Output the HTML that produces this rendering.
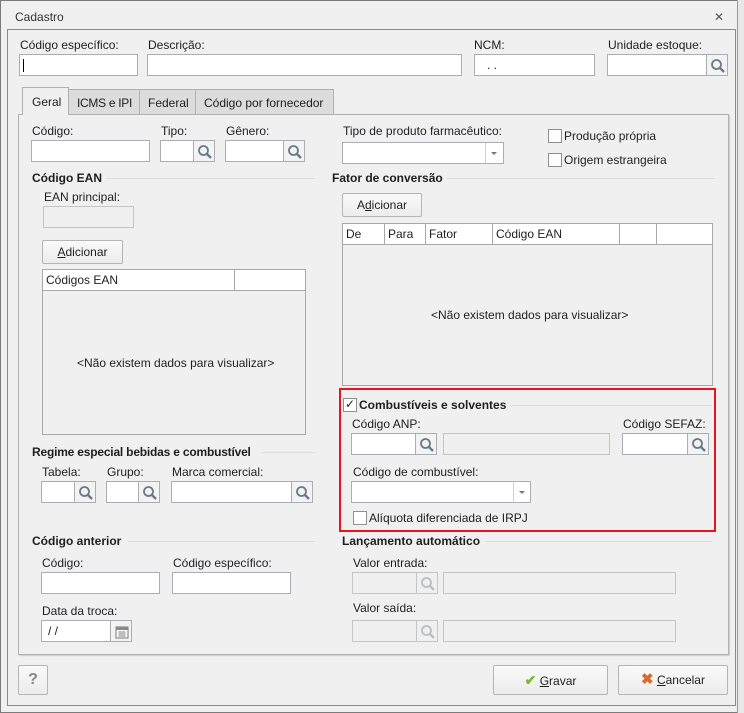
<!DOCTYPE html>
<html><head><meta charset="utf-8"><style>
*{box-sizing:border-box;margin:0;padding:0}
body{width:744px;height:713px;background:#f0f0f0;font-family:"Liberation Sans",sans-serif;font-size:12px;color:#1e1e1e;position:relative;overflow:hidden}
.a{position:absolute}
.l{position:absolute;white-space:nowrap;line-height:14px}
.i{position:absolute;background:#fff;border:1px solid #abadb3;height:22px}
.d{position:absolute;background:#f0f0f0;border:1px solid #c4c4c4;height:22px}
.sb{position:absolute;background:#f3f3f3;border:1px solid #abadb3;height:22px;width:22px}
.sb svg{position:absolute;left:3px;top:3px}
.b{font-weight:bold}
.hl{position:absolute;height:1px;background:#dcdcdc}
.btn{position:absolute;border:1px solid #b5b5b5;border-radius:2px;background:linear-gradient(#fafafa,#ececec);text-align:center}
.cb{position:absolute;width:14px;height:14px;border:1px solid #8f8f8f;background:#fff}
.grid{position:absolute;background:#f0f0f0;border:1px solid #a8a8a8}
.gh{position:absolute;left:0;right:0;top:0;height:21px;background:#fff;border-bottom:1px solid #a8a8a8}
.gc{position:absolute;top:0;height:20px;border-right:1px solid #a8a8a8;padding:3px 3px;line-height:14px}
</style></head><body>
<div class="a" style="left:0;top:0;width:744px;height:713px;border:1px solid #7a7a7a;background:#f0f0f0"></div>
<div class="a" style="left:737px;top:0;width:7px;height:713px;background:#e8e8e8;border-left:1px solid #9a9a9a"></div>
<div class="l" style="left:15px;top:10px;color:#333">Cadastro</div>
<div class="l" style="left:714px;top:10px;font-size:12px;color:#555">✕</div>
<div class="a" style="left:7px;top:29px;width:729px;height:677px;border:1px solid #8a8a8a;background:#f0f0f0"></div>

<div class="l" style="left:20px;top:38px">Código específico:</div>
<div class="l" style="left:148px;top:38px">Descrição:</div>
<div class="l" style="left:474px;top:38px">NCM:</div>
<div class="l" style="left:608px;top:38px">Unidade estoque:</div>
<div class="i" style="left:19px;top:54px;width:119px"><div class="a" style="left:3px;top:4px;width:1px;height:13px;background:#000"></div></div>
<div class="i" style="left:147px;top:54px;width:315px"></div>
<div class="i" style="left:474px;top:54px;width:121px"><span class="l" style="left:12px;top:3px">. .</span></div>
<div class="i" style="left:607px;top:54px;width:100px"></div>
<div class="sb" style="left:706px;top:54px"><svg width="16" height="16"><circle cx="6.5" cy="6.5" r="4.5" fill="none" stroke="#6a7a8a" stroke-width="1.8"/><path d="M10 10l4 4" stroke="#6a7a8a" stroke-width="2.4"/></svg></div>

<!-- tabs -->
<div class="a" style="left:18px;top:114px;width:711px;height:541px;border:1px solid #b0b0b0;background:#f0f0f0;box-shadow:1px 1px 1px #ccc"></div>
<div class="a" style="left:68px;top:89px;width:72px;height:26px;background:#dcdcdc;border:1px solid #b0b0b0"></div>
<div class="a" style="left:139px;top:89px;width:57px;height:26px;background:#dcdcdc;border:1px solid #b0b0b0"></div>
<div class="a" style="left:195px;top:89px;width:139px;height:26px;background:#dcdcdc;border:1px solid #b0b0b0"></div>
<div class="a" style="left:22px;top:87px;width:47px;height:28px;background:#f0f0f0;border:1px solid #b0b0b0;border-bottom:none"></div>
<div class="l" style="left:32px;top:95px">Geral</div>
<div class="l" style="left:77px;top:96px;letter-spacing:-0.3px">ICMS e IPI</div>
<div class="l" style="left:148px;top:96px">Federal</div>
<div class="l" style="left:204px;top:96px">Código por fornecedor</div>

<div class="l" style="left:32px;top:124px">Código:</div>
<div class="l" style="left:161px;top:124px">Tipo:</div>
<div class="l" style="left:226px;top:124px">Gênero:</div>
<div class="l" style="left:343px;top:124px">Tipo de produto farmacêutico:</div>
<div class="i" style="left:31px;top:140px;width:119px"></div>
<div class="i" style="left:160px;top:140px;width:34px"></div>
<div class="sb" style="left:193px;top:140px"><svg width="16" height="16"><circle cx="6.5" cy="6.5" r="4.5" fill="none" stroke="#6a7a8a" stroke-width="1.8"/><path d="M10 10l4 4" stroke="#6a7a8a" stroke-width="2.4"/></svg></div>
<div class="i" style="left:225px;top:140px;width:59px"></div>
<div class="sb" style="left:283px;top:140px"><svg width="16" height="16"><circle cx="6.5" cy="6.5" r="4.5" fill="none" stroke="#6a7a8a" stroke-width="1.8"/><path d="M10 10l4 4" stroke="#6a7a8a" stroke-width="2.4"/></svg></div>
<div class="i" style="left:342px;top:142px;width:162px"><div class="a" style="left:142px;top:0;width:1px;height:20px;background:#d0d0d0"></div><div class="a" style="left:148px;top:9px;border:3px solid transparent;border-top:3px solid #777"></div></div>
<div class="cb" style="left:548px;top:129px"></div><div class="l" style="left:564px;top:129px">Produção própria</div>
<div class="cb" style="left:548px;top:153px"></div><div class="l" style="left:564px;top:153px">Origem estrangeira</div>

<div class="l b" style="left:32px;top:171px">Código EAN</div><div class="hl" style="left:106px;top:178px;width:209px"></div>
<div class="l b" style="left:332px;top:171px">Fator de conversão</div><div class="hl" style="left:447px;top:178px;width:268px"></div>
<div class="l" style="left:44px;top:190px">EAN principal:</div>
<div class="d" style="left:43px;top:206px;width:91px"></div>
<div class="btn" style="left:42px;top:240px;width:81px;height:24px;line-height:22px"><u>A</u>dicionar</div>
<div class="btn" style="left:342px;top:193px;width:80px;height:24px;line-height:22px">A<u>d</u>icionar</div>
<div class="grid" style="left:42px;top:269px;width:264px;height:166px"><div class="gh"><div class="gc" style="left:0;width:192px">Códigos EAN</div></div>
<div class="l" style="left:34px;top:86px">&lt;Não existem dados para visualizar&gt;</div></div>
<div class="grid" style="left:342px;top:223px;width:371px;height:163px"><div class="gh"><div class="gc" style="left:0;width:42px">De</div><div class="gc" style="left:42px;width:41px">Para</div><div class="gc" style="left:83px;width:67px">Fator</div><div class="gc" style="left:150px;width:127px">Código EAN</div><div class="gc" style="left:277px;width:37px"></div></div>
<div class="l" style="left:88px;top:84px">&lt;Não existem dados para visualizar&gt;</div></div>

<!-- red box -->
<div class="a" style="left:339px;top:388px;width:377px;height:144px;border:2px solid #e8141c"></div>
<div class="cb" style="left:343px;top:398px"></div><div class="l" style="left:345px;top:397px;font-size:12px">✓</div>
<div class="l b" style="left:359px;top:398px">Combustíveis e solventes</div><div class="hl" style="left:510px;top:405px;width:202px"></div>
<div class="l" style="left:352px;top:417px">Código ANP:</div>
<div class="l" style="left:623px;top:417px">Código SEFAZ:</div>
<div class="i" style="left:351px;top:433px;width:65px"></div>
<div class="sb" style="left:415px;top:433px"><svg width="16" height="16"><circle cx="6.5" cy="6.5" r="4.5" fill="none" stroke="#6a7a8a" stroke-width="1.8"/><path d="M10 10l4 4" stroke="#6a7a8a" stroke-width="2.4"/></svg></div>
<div class="d" style="left:443px;top:433px;width:167px"></div>
<div class="i" style="left:622px;top:433px;width:66px"></div>
<div class="sb" style="left:687px;top:433px"><svg width="16" height="16"><circle cx="6.5" cy="6.5" r="4.5" fill="none" stroke="#6a7a8a" stroke-width="1.8"/><path d="M10 10l4 4" stroke="#6a7a8a" stroke-width="2.4"/></svg></div>
<div class="l" style="left:353px;top:465px">Código de combustível:</div>
<div class="i" style="left:351px;top:481px;width:180px"><div class="a" style="left:161px;top:0;width:1px;height:20px;background:#d0d0d0"></div><div class="a" style="left:167px;top:9px;border:3px solid transparent;border-top:3px solid #777"></div></div>
<div class="cb" style="left:353px;top:511px"></div><div class="l" style="left:369px;top:511px">Alíquota diferenciada de IRPJ</div>

<div class="l b" style="left:32px;top:445px;letter-spacing:-0.2px">Regime especial bebidas e combustível</div><div class="hl" style="left:262px;top:452px;width:53px"></div>
<div class="l" style="left:42px;top:465px">Tabela:</div>
<div class="l" style="left:107px;top:465px">Grupo:</div>
<div class="l" style="left:172px;top:465px">Marca comercial:</div>
<div class="i" style="left:41px;top:481px;width:34px"></div>
<div class="sb" style="left:74px;top:481px"><svg width="16" height="16"><circle cx="6.5" cy="6.5" r="4.5" fill="none" stroke="#6a7a8a" stroke-width="1.8"/><path d="M10 10l4 4" stroke="#6a7a8a" stroke-width="2.4"/></svg></div>
<div class="i" style="left:106px;top:481px;width:33px"></div>
<div class="sb" style="left:138px;top:481px"><svg width="16" height="16"><circle cx="6.5" cy="6.5" r="4.5" fill="none" stroke="#6a7a8a" stroke-width="1.8"/><path d="M10 10l4 4" stroke="#6a7a8a" stroke-width="2.4"/></svg></div>
<div class="i" style="left:171px;top:481px;width:121px"></div>
<div class="sb" style="left:291px;top:481px"><svg width="16" height="16"><circle cx="6.5" cy="6.5" r="4.5" fill="none" stroke="#6a7a8a" stroke-width="1.8"/><path d="M10 10l4 4" stroke="#6a7a8a" stroke-width="2.4"/></svg></div>

<div class="l b" style="left:32px;top:534px">Código anterior</div><div class="hl" style="left:128px;top:541px;width:187px"></div>
<div class="l b" style="left:342px;top:534px">Lançamento automático</div><div class="hl" style="left:485px;top:541px;width:227px"></div>
<div class="l" style="left:42px;top:556px">Código:</div>
<div class="l" style="left:173px;top:556px">Código específico:</div>
<div class="l" style="left:353px;top:556px">Valor entrada:</div>
<div class="i" style="left:41px;top:572px;width:119px"></div>
<div class="i" style="left:172px;top:572px;width:119px"></div>
<div class="d" style="left:352px;top:572px;width:65px"></div>
<div class="d" style="left:416px;top:572px;width:22px"><svg class="a" style="left:3px;top:3px" width="16" height="16"><circle cx="6.5" cy="6.5" r="4.5" fill="none" stroke="#b8bfc6" stroke-width="1.8"/><path d="M10 10l4 4" stroke="#b8bfc6" stroke-width="2.4"/></svg></div>
<div class="d" style="left:443px;top:572px;width:233px"></div>
<div class="l" style="left:42px;top:604px">Data da troca:</div>
<div class="l" style="left:353px;top:601px">Valor saída:</div>
<div class="i" style="left:41px;top:620px;width:70px"><span class="l" style="left:6px;top:3px">/ /</span></div>
<div class="sb" style="left:110px;top:620px"><svg width="16" height="16"><rect x="2" y="3" width="12" height="11" fill="#fff" stroke="#777"/><rect x="2" y="3" width="12" height="3" fill="#888"/><path d="M4 8h8M4 10h8M4 12h8M6 7v6M8 7v6M10 7v6" stroke="#999" stroke-width="0.8"/></svg></div>
<div class="d" style="left:352px;top:620px;width:65px"></div>
<div class="d" style="left:416px;top:620px;width:22px"><svg class="a" style="left:3px;top:3px" width="16" height="16"><circle cx="6.5" cy="6.5" r="4.5" fill="none" stroke="#b8bfc6" stroke-width="1.8"/><path d="M10 10l4 4" stroke="#b8bfc6" stroke-width="2.4"/></svg></div>
<div class="d" style="left:443px;top:620px;width:233px"></div>

<div class="btn" style="left:18px;top:665px;width:30px;height:30px;line-height:28px;font-size:16px;font-weight:bold;color:#888">?</div>
<div class="btn" style="left:493px;top:665px;width:115px;height:30px;line-height:28px"><span style="color:#7cb82f;font-weight:bold;font-size:14px">✔</span> <u>G</u>ravar</div>
<div class="btn" style="left:618px;top:665px;width:110px;height:30px;line-height:28px"><span style="color:#e06a2c;font-weight:bold;font-size:15px">✖</span> <u>C</u>ancelar</div>
</body></html>
